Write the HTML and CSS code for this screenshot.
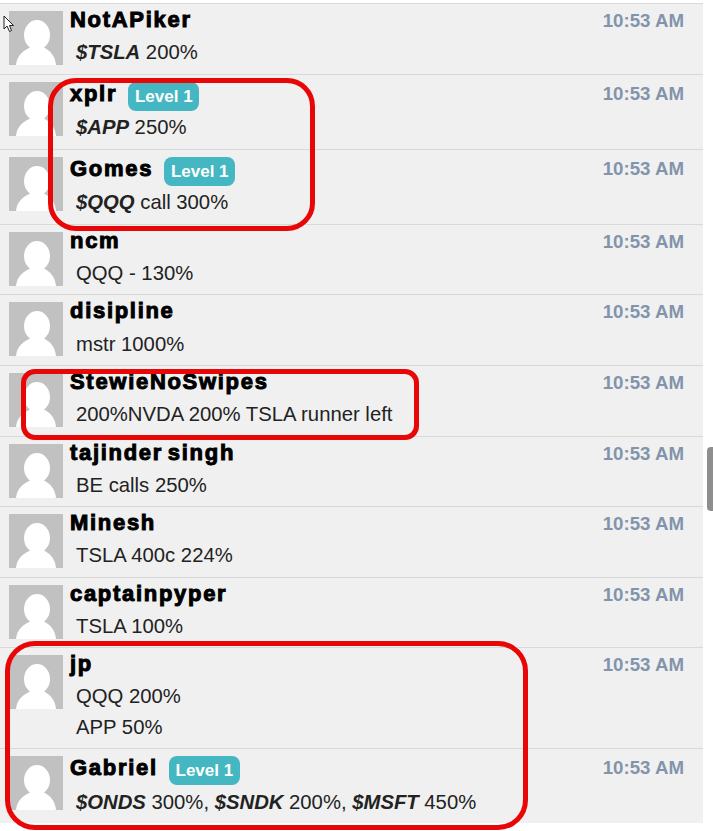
FILE: index.html
```html
<!DOCTYPE html>
<html lang="en">
<head>
<meta charset="utf-8">
<title>Chat</title>
<link rel="stylesheet" href="styles.css">
</head>
<body>
<svg width="0" height="0" class="defs"><defs>
<symbol id="avatar" viewBox="0 0 54 54">
<rect width="54" height="54" fill="#c1c1c1"/>
<ellipse cx="28" cy="24" rx="13" ry="15" fill="#fff"/>
<path d="M7 54C8 44 14 40 22 36H34C42 40 46 45 47 54Z" fill="#fff"/>
</symbol>
</defs></svg>
<main class="feed">
<article class="row"><svg class="avatar"><use href="#avatar"/></svg><div class="body"><div class="head"><span class="name">NotAPiker</span><time class="time">10:53 AM</time></div><p class="msg"><b>$TSLA</b> 200%</p></div></article>
<article class="row tall"><svg class="avatar"><use href="#avatar"/></svg><div class="body"><div class="head"><span class="name">xplr</span><span class="badge">Level 1</span><time class="time">10:53 AM</time></div><p class="msg"><b>$APP</b> 250%</p></div></article>
<article class="row tall"><svg class="avatar"><use href="#avatar"/></svg><div class="body"><div class="head"><span class="name">Gomes</span><span class="badge">Level 1</span><time class="time">10:53 AM</time></div><p class="msg"><b>$QQQ</b> call 300%</p></div></article>
<article class="row"><svg class="avatar"><use href="#avatar"/></svg><div class="body"><div class="head"><span class="name">ncm</span><time class="time">10:53 AM</time></div><p class="msg">QQQ - 130%</p></div></article>
<article class="row"><svg class="avatar"><use href="#avatar"/></svg><div class="body"><div class="head"><span class="name">disipline</span><time class="time">10:53 AM</time></div><p class="msg">mstr 1000%</p></div></article>
<article class="row"><svg class="avatar"><use href="#avatar"/></svg><div class="body"><div class="head"><span class="name">StewieNoSwipes</span><time class="time">10:53 AM</time></div><p class="msg">200%NVDA 200% TSLA runner left</p></div></article>
<article class="row"><svg class="avatar"><use href="#avatar"/></svg><div class="body"><div class="head"><span class="name">tajinder singh</span><time class="time">10:53 AM</time></div><p class="msg">BE calls 250%</p></div></article>
<article class="row"><svg class="avatar"><use href="#avatar"/></svg><div class="body"><div class="head"><span class="name">Minesh</span><time class="time">10:53 AM</time></div><p class="msg">TSLA 400c 224%</p></div></article>
<article class="row"><svg class="avatar"><use href="#avatar"/></svg><div class="body"><div class="head"><span class="name">captainpyper</span><time class="time">10:53 AM</time></div><p class="msg">TSLA 100%</p></div></article>
<article class="row"><svg class="avatar"><use href="#avatar"/></svg><div class="body"><div class="head"><span class="name">jp</span><time class="time">10:53 AM</time></div><p class="msg">QQQ 200%</p><p class="msg">APP 50%</p></div></article>
<article class="row tall"><svg class="avatar"><use href="#avatar"/></svg><div class="body"><div class="head"><span class="name">Gabriel</span><span class="badge">Level 1</span><time class="time">10:53 AM</time></div><p class="msg"><b>$ONDS</b> 300%, <b>$SNDK</b> 200%, <b>$MSFT</b> 450%</p></div></article>
</main>
<div class="mark mark-a"></div>
<div class="mark mark-b"></div>
<div class="mark mark-c"></div>
<div class="thumb"></div>
<svg class="cursor" width="12" height="18" viewBox="0 0 12 18"><path d="M1 1V14L4 11L6.500 16.500L8.500 15.500L6.500 10.500H10.500Z" fill="#fff" stroke="#222" stroke-width="1"/></svg>
</body>
</html>
```
FILE: styles.css
```css
html, body {
  margin: 0;
  padding: 0;
  background: #fff;
  height: 831px;
  overflow: hidden;
}
body {
  position: relative;
  font-family: "Liberation Sans", Arial, sans-serif;
  color: #222;
}
.defs {
  position: absolute;
}
.feed {
  width: 703px;
  padding-top: 3.400px;
}
.row {
  display: flex;
  box-sizing: border-box;
  background: #f0f0f0;
  border-top: 1px solid #d9d9d9;
  padding: 0 19px 6px 9px;
}
.avatar {
  flex: none;
  width: 54px;
  height: 54px;
  margin-top: 7px;
}
.body {
  flex: 1;
  min-width: 0;
  padding-left: 7px;
}
.head {
  display: flex;
  align-items: flex-start;
  height: 33.050px;
}
.tall .head {
  height: 37.500px;
}
.name {
  font-size: 22px;
  line-height: 32px;
  font-weight: 700;
  letter-spacing: 1.700px;
  word-spacing: -3px;
  color: #000;
  -webkit-text-stroke: 1px #000;
}
.tall .name {
  margin-top: 3px;
}
.tall .time {
  margin-top: 2px;
}
.badge {
  margin: 7px 0 0 11.300px;
  padding: 0 6.500px;
  height: 29px;
  line-height: 29px;
  border-radius: 8px;
  background: #45b7c2;
  color: #fff;
  font-size: 17px;
  font-weight: 700;
}
.time {
  margin-left: auto;
  font-size: 18.700px;
  line-height: 34px;
  font-weight: 700;
  color: #8294ab;
}
.msg {
  margin: 0;
  padding-left: 6px;
  font-size: 20.300px;
  line-height: 30.500px;
  color: #222;
}
.msg b {
  font-style: italic;
}
.mark {
  position: absolute;
  box-sizing: border-box;
  border: 5px solid #e80606;
}
.mark-a {
  left: 48px;
  top: 78px;
  width: 267px;
  height: 153px;
  border-radius: 28px;
}
.mark-b {
  left: 21px;
  top: 369px;
  width: 398px;
  height: 71px;
  border-radius: 14px;
}
.mark-c {
  left: 5px;
  top: 641px;
  width: 523px;
  height: 189px;
  border-radius: 30px;
}
.thumb {
  position: absolute;
  left: 707px;
  top: 447px;
  width: 6px;
  height: 64px;
  background: #8e8e8e;
  border-radius: 4px 0 0 4px;
}
.cursor {
  position: absolute;
  left: 3px;
  top: 15px;
}
```
